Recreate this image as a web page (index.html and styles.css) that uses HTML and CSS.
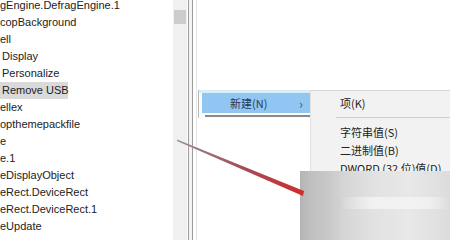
FILE: index.html
```html
<!DOCTYPE html>
<html>
<head>
<meta charset="utf-8">
<link rel="stylesheet" href="styles.css">
</head>
<body>
<div class="screen">
  <div class="list">
    <div class="row">gEngine.DefragEngine.1</div>
    <div class="row">copBackground</div>
    <div class="row">ell</div>
    <div class="row ind">Display</div>
    <div class="row ind">Personalize</div>
    <div class="row ind sel">Remove USB</div>
    <div class="row">ellex</div>
    <div class="row">opthemepackfile</div>
    <div class="row">e</div>
    <div class="row">e.1</div>
    <div class="row">eDisplayObject</div>
    <div class="row">eRect.DeviceRect</div>
    <div class="row">eRect.DeviceRect.1</div>
    <div class="row">eUpdate</div>
  </div>
  <div class="scroll"><div class="thumb"></div></div>
  <div class="divider"><div class="line"></div><div class="gap"></div><div class="line"></div></div>
  <div class="pane"></div>

  <div class="menu">
    <div class="menu-top"></div>
    <div class="menu-item"><span class="label">新建(N)</span><span class="chev">›</span></div>
    <div class="menu-shadow"></div>
  </div>

  <div class="submenu">
    <div class="sub-item">项(K)</div>
    <div class="sep"></div>
    <div class="sub-item">字符串值(S)</div>
    <div class="sub-item">二进制值(B)</div>
    <div class="sub-item">DWORD (32 位)值(D)</div>
  </div>

  <div class="blur"><div class="blur-band"></div></div>

  <svg class="arrow" width="450" height="240" viewBox="0 0 450 240">
    <defs>
      <linearGradient id="g" x1="177" y1="140" x2="304" y2="194" gradientUnits="userSpaceOnUse">
        <stop offset="0" stop-color="#9a8a96"/>
        <stop offset="0.5" stop-color="#a0505a"/>
        <stop offset="1" stop-color="#d42a2a"/>
      </linearGradient>
    </defs>
    <polygon points="177,139.5 304,191 303,196 177,141" fill="url(#g)"/>
  </svg>
</div>
</body>
</html>
```

FILE: styles.css
```css
html, body {
  margin: 0;
  padding: 0;
  background: #ffffff;
}
.screen {
  position: relative;
  width: 450px;
  height: 240px;
  overflow: hidden;
  display: flex;
  font-family: "Liberation Sans", "Noto Sans CJK SC", sans-serif;
  font-size: 11px;
  color: #222222;
}
.list {
  width: 173px;
  flex: none;
  margin-top: -3px;
}
.row {
  height: 17px;
  line-height: 17px;
  white-space: nowrap;
  padding-left: 0;
}
.row.ind {
  padding-left: 2px;
}
.row.sel {
  background: #dadada;
  width: 66px;
}
.scroll {
  width: 14px;
  flex: none;
  background: #f0f0f0;
  position: relative;
}
.thumb {
  margin: 10px 1px 0 1px;
  height: 14px;
  background: #cdcdcd;
}
.divider {
  flex: none;
  display: flex;
  width: 8px;
  padding-left: 1px;
}
.divider .line {
  width: 1px;
  background: #9c9c9c;
}
.divider .gap {
  width: 3px;
  background: #f4f4f4;
}
.pane {
  flex: 1;
  background: #ffffff;
  border-left: 1px solid #e6e6e6;
}
.menu {
  position: absolute;
  left: 198px;
  top: 90px;
  width: 114px;
  height: 28px;
  background: #fbfbfb;
  border-left: 1px solid #b8b8b8;
}
.menu-top {
  height: 3px;
  background: #d8eef8;
}
.menu-item {
  margin-left: 3px;
  width: 108px;
  height: 20px;
  background: #91c6f2;
  display: flex;
  align-items: center;
  font-family: "Noto Sans CJK SC", sans-serif;
  font-size: 11px;
  color: #2a3a55;
}
.menu-item .label {
  padding-left: 28px;
  flex: 1;
}
.menu-item .chev {
  padding-right: 7px;
  font-size: 13px;
  color: #4a5a70;
}
.menu-shadow {
  margin-left: 6px;
  margin-top: 2px;
  height: 2px;
  width: 108px;
  background: #8a8a8a;
}
.submenu {
  position: absolute;
  left: 310px;
  top: 90px;
  width: 140px;
  height: 90px;
  background: #f2f2f2;
  border-top: 1px solid #d8d8d8;
  border-left: 1px solid #e2e2e2;
  padding-top: 3px;
  font-family: "Noto Sans CJK SC", sans-serif;
  font-size: 11px;
  color: #222222;
}
.sub-item {
  height: 18px;
  line-height: 18px;
  padding-left: 29px;
  white-space: nowrap;
}
.sep {
  height: 1px;
  background: #cfcfcf;
  margin: 5px 0 5px 25px;
}
.blur {
  position: absolute;
  left: 300px;
  top: 171px;
  width: 150px;
  height: 69px;
  background: linear-gradient(90deg, #b4b4b4 0px, #bfbfbf 10px, #c9c9c9 30px, #d6d6d6 45px, #e2e2e2 75px, #e8e8e8 110px, #dcdcdc 150px);
}
.blur-band {
  margin: 26px 0 0 40px;
  height: 12px;
  background: linear-gradient(90deg, rgba(245,245,245,0), rgba(245,245,245,0.8) 30%, rgba(245,245,245,0.7) 80%, rgba(245,245,245,0));
}
.arrow {
  position: absolute;
  left: 0;
  top: 0;
}
```
